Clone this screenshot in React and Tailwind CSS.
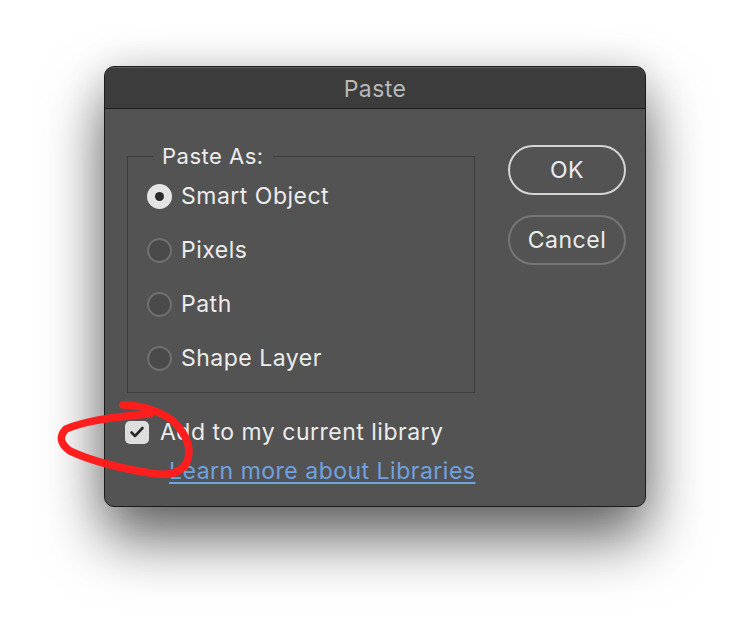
export default function App() {
  const font = { fontFamily: 'Inter, "Noto Sans", sans-serif' };
  const options = ["Smart Object", "Pixels", "Path", "Shape Layer"];
  return (
    <div className="relative w-[750px] h-[644px] bg-white overflow-hidden" style={font}>
      <div className="pt-[66px] pl-[104px]">
        <div className="w-[542px] h-[441px] rounded-[10px] border border-[#1c1c1c] bg-[#535353] shadow-[0_32px_60px_rgba(0,0,0,0.6),0_0_40px_rgba(0,0,0,0.12)] overflow-hidden flex flex-col">
          <div className="h-[42px] shrink-0 bg-[#3c3c3c] border-b border-[#1f1f1f] shadow-[inset_0_1px_0_#5e5e5e] flex items-center justify-center pt-[3px]">
            <span className="text-[23px] text-[#b9b9b9] tracking-[0.4px]">Paste</span>
          </div>
          <div className="flex pt-[34px] pl-[22px] pr-[19px] tracking-[0.5px]">
            <div className="flex flex-col">
              <fieldset className="w-[348px] border border-[#3d3d3d] pb-[7px]">
                <legend className="ml-[25px] px-[9px] h-[26px] leading-[26px] text-[22px] text-[#ececec]">Paste As:</legend>
                {options.map((o, i) => (
                  <div key={o} className="h-[54px] flex items-center pl-[19px]">
                    {i === 0 ? (
                      <span className="w-[25px] h-[25px] rounded-full bg-[#e4e4e4] flex items-center justify-center">
                        <span className="w-[9px] h-[9px] rounded-full bg-[#2b2b2b]" />
                      </span>
                    ) : (
                      <span className="w-[25px] h-[25px] rounded-full border-2 border-[#6f6f6f] bg-[#4a4a4a]" />
                    )}
                    <span className="ml-[9px] text-[23px] text-[#ececec]">{o}</span>
                  </div>
                ))}
              </fieldset>
              <div className="mt-[24px] -ml-[2px] h-[30px] flex items-center">
                <span className="w-[24px] h-[23px] rounded-[5px] bg-[#dedede] flex items-center justify-center">
                  <svg width="16" height="14" viewBox="0 0 16 14">
                    <path d="M2.5 7.5 L6 11 L13.5 3" fill="none" stroke="#2a2a2a" strokeWidth="2.6" strokeLinecap="round" strokeLinejoin="round" />
                  </svg>
                </span>
                <span className="ml-[11px] text-[23px] text-[#ececec]">Add to my current library</span>
              </div>
              <div className="mt-[9px] h-[30px] flex items-center pl-[42px]">
                <span className="text-[23px] text-[#6fa2e0] underline underline-offset-[3px] decoration-[2px]">Learn more about Libraries</span>
              </div>
            </div>
            <div className="ml-auto mt-[2px] flex flex-col gap-[20px]">
              <button className="w-[118px] h-[50px] rounded-full border-2 border-[#d4d4d4] text-[23px] text-[#ececec]">OK</button>
              <button className="w-[118px] h-[50px] rounded-full border-2 border-[#767676] text-[23px] text-[#ececec]">Cancel</button>
            </div>
          </div>
        </div>
      </div>
      <svg className="absolute left-0 top-0 pointer-events-none" width="750" height="644">
        <path
          d="M123 405 Q150 405 172 420 Q196 443 186 464 Q176 478 150 473 Q100 465 70 451 Q55 440 66 429 Q92 418 150 414"
          fill="none"
          stroke="#ff1e1e"
          strokeWidth="7.5"
          strokeLinecap="round"
          strokeLinejoin="round"
        />
      </svg>
    </div>
  );
}
